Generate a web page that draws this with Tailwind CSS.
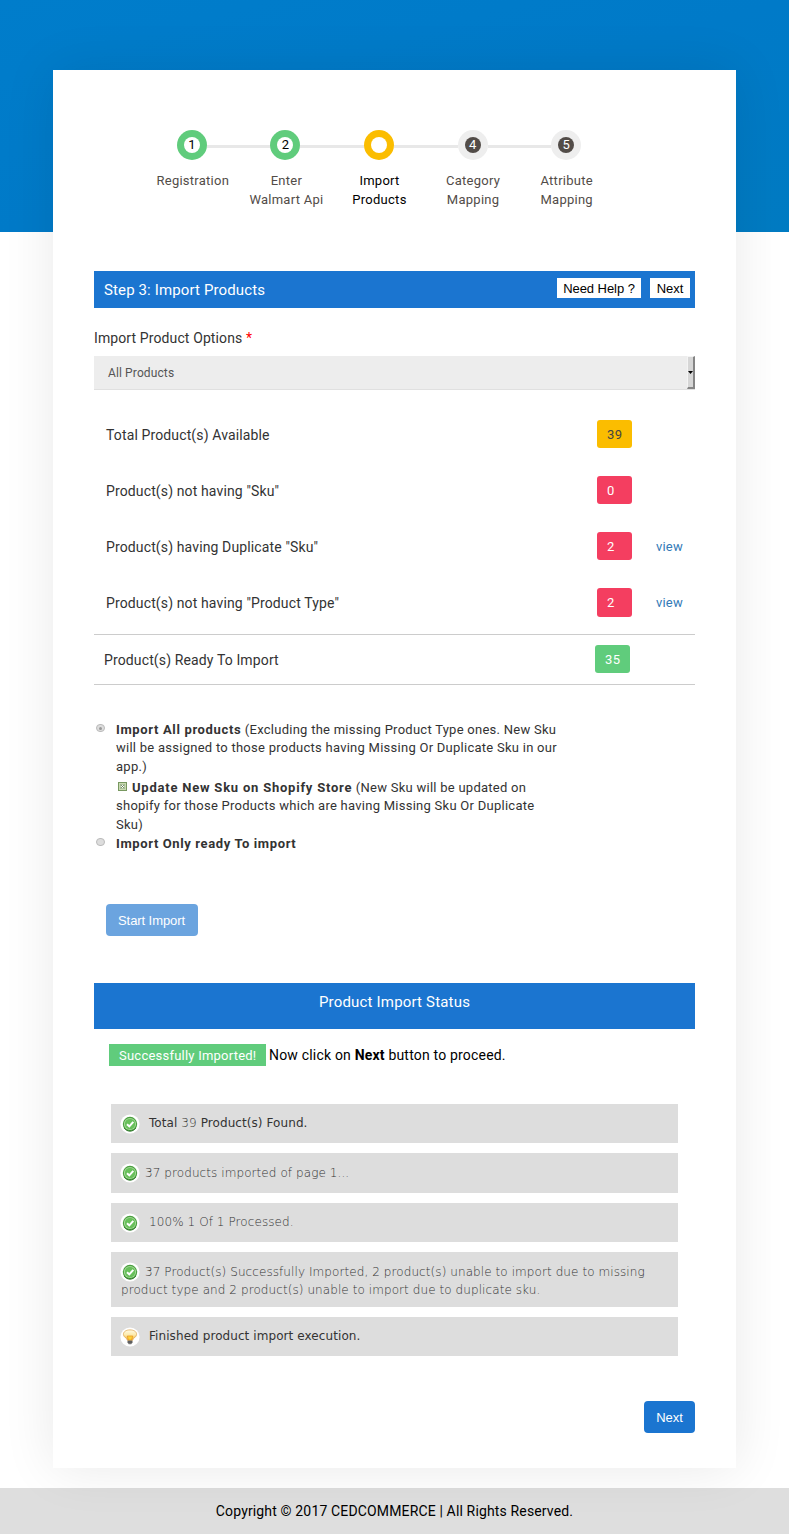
<!DOCTYPE html>
<html lang="en">
<head>
<meta charset="utf-8">
<title>Import Products</title>
<script src="https://cdn.jsdelivr.net/npm/@tailwindcss/browser@4"></script>
</head>
<body class="bg-white">
<svg class="absolute size-0">
  <defs><linearGradient id="g" x1="0" y1="0" x2="0" y2="1"><stop offset="0" stop-color="#fffbe6"/><stop offset=".5" stop-color="#fce9a8"/><stop offset="1" stop-color="#f0a020"/></linearGradient></defs>
  <symbol id="ok" viewBox="0 0 20 20">
    <circle cx="10" cy="10" r="9.6" fill="#fff"/>
    <circle cx="10" cy="10" r="7.2" fill="#4a9f3f"/>
    <circle cx="10" cy="10" r="6.1" fill="#a9dc9c"/>
    <circle cx="10" cy="10" r="5.2" fill="#68c05b"/>
    <path d="M4.2 14.2A7.2 7.2 0 0 0 15.8 14.2" fill="none" stroke="#2a7425" stroke-width="1"/>
    <path d="M7 10.2l2.3 2.2 4-4.6" fill="none" stroke="#fff" stroke-width="2"/>
  </symbol>
  <symbol id="bulb" viewBox="0 0 20 20">
    <circle cx="10" cy="10" r="9.6" fill="#fff"/>
    <path d="M7.6 13.4C7.4 11.4 3.4 10.2 3.4 7.3 3.4 4.6 6.2 2.9 10 2.9s6.6 1.7 6.6 4.4c0 2.9-4 4.1-4.2 6.1z" fill="url(#g)" stroke="#dfa955" stroke-width=".8"/>
    <path d="M7.3 9l1.1 4h3.2l1.1-4z" fill="#fbd23c" stroke="#e8951c" stroke-width=".7"/>
    <path d="M7.6 13.4h4.8v2.4l-1.2 1.4H8.8l-1.2-1.4z" fill="#777"/>
    <path d="M7.6 15h4.8" stroke="#444" stroke-width=".9"/>
  </symbol>
</svg>
<div class="relative w-[789px] h-[1534px] overflow-hidden flex flex-col font-['Roboto',sans-serif] text-[13px] leading-[18.57px] text-[#333] whitespace-nowrap">
  <div class="absolute inset-x-0 top-0 h-[232px] bg-linear-to-br from-[#007dcb] via-[#007ac8] to-[#007bc2]"></div>
  <div class="absolute inset-x-0 top-[1488px] h-[46px] bg-[#dedede]"></div>

  <main class="relative mt-[70px] ml-[53px] w-[683px] h-[1398px] shrink-0 bg-white shadow-[0_0_50px_rgba(0,0,0,0.09)] px-[41px] pt-[60px] flex flex-col">
    <ol class="ml-[51px] w-[468px] h-[81px] shrink-0 grid grid-cols-5 text-center tracking-[0.26px] text-[#524c48]">
      <li class="flex flex-col items-center">
        <div class="w-full flex items-center"><span class="flex-1"></span><span class="size-[30px] rounded-full bg-[#60cc7c] flex items-center justify-center"><b class="size-4 rounded-full bg-white text-black font-normal leading-4 tracking-normal">1</b></span><span class="flex-1 h-[3px] mt-[3px] bg-[#e8e8e8]"></span></div>
        <p class="mt-[12px] pl-[2px]">Registration</p>
      </li>
      <li class="flex flex-col items-center">
        <div class="w-full flex items-center"><span class="flex-1 h-[3px] mt-[3px] bg-[#e8e8e8]"></span><span class="size-[30px] rounded-full bg-[#60cc7c] flex items-center justify-center"><b class="size-4 rounded-full bg-white text-black font-normal leading-4 tracking-normal">2</b></span><span class="flex-1 h-[3px] mt-[3px] bg-[#e8e8e8]"></span></div>
        <p class="mt-[12px] pl-[2px]">Enter<br>Walmart Api</p>
      </li>
      <li class="flex flex-col items-center text-black">
        <div class="w-full flex items-center"><span class="flex-1 h-[3px] mt-[3px] bg-[#e8e8e8]"></span><span class="size-[30px] rounded-full bg-[#fbbd00] flex items-center justify-center"><b class="size-4 rounded-full bg-white"></b></span><span class="flex-1 h-[3px] mt-[3px] bg-[#e8e8e8]"></span></div>
        <p class="mt-[12px] pl-[1px]">Import<br>Products</p>
      </li>
      <li class="flex flex-col items-center">
        <div class="w-full flex items-center"><span class="flex-1 h-[3px] mt-[3px] bg-[#e8e8e8]"></span><span class="size-[30px] rounded-full bg-[#eee] flex items-center justify-center"><b class="size-4 rounded-full bg-[#524c48] text-white font-normal leading-4 tracking-normal">4</b></span><span class="flex-1 h-[3px] mt-[3px] bg-[#e8e8e8]"></span></div>
        <p class="mt-[12px] pl-[1px]">Category<br>Mapping</p>
      </li>
      <li class="flex flex-col items-center">
        <div class="w-full flex items-center"><span class="flex-1 h-[3px] mt-[3px] bg-[#e8e8e8]"></span><span class="size-[30px] rounded-full bg-[#eee] flex items-center justify-center"><b class="size-4 rounded-full bg-[#524c48] text-white font-normal leading-4 tracking-normal">5</b></span><span class="flex-1"></span></div>
        <p class="mt-[12px] pl-[1px]">Attribute<br>Mapping</p>
      </li>
    </ol>

    <div class="mt-[60px] h-[37px] shrink-0 bg-[#1b75d0] pl-[10px] pr-[5px] flex items-start">
      <h1 class="flex-1 text-[15px] leading-[38px] tracking-[0.13px] text-white">Step 3: Import Products</h1>
      <button class="mt-[7px] w-[84px] h-5 bg-white text-black font-['Liberation_Sans',sans-serif] text-[13px] leading-[21px] tracking-[-0.05px]">Need Help ?</button>
      <button class="mt-[7px] ml-[9px] w-10 h-5 bg-white text-black font-['Liberation_Sans',sans-serif] text-[13px] leading-[21px]">Next</button>
    </div>

    <label class="mt-[20px] text-[14px] leading-5 tracking-[0.11px]">Import Product Options <span class="text-[#f00]">*</span></label>
    <div class="mt-[8px] h-[34px] shrink-0 bg-[#ededed] border-b border-[#e0e0e0] flex items-stretch text-[12px] text-[#555]">
      <span class="pl-[14px] flex-1 leading-[34px] tracking-[0.12px]">All Products</span>
      <span class="w-[8px] bg-[#d6d6d6] border-l border-l-[#f4f4f4] border-t border-t-[#f4f4f4] border-r-2 border-r-[#858585] border-b-2 border-b-[#858585] flex items-center justify-center"><svg class="w-[5px] h-[3px] shrink-0" viewBox="0 0 5 3"><path d="M0 0h5L2.5 3z"/></svg></span>
    </div>

    <div class="mt-[30px] pl-[12px] text-[14px] tracking-[0.13px] flex flex-col">
      <div class="h-[56px] flex"><span class="w-[491px] leading-[30px]">Total Product(s) Available</span><span class="w-[35px] h-[28px] rounded-[3px] bg-[#fbbd00] pl-[10px] text-[13px] leading-[29px] tracking-[0.5px] text-[#444]">39</span></div>
      <div class="h-[56px] flex"><span class="w-[491px] leading-[30px]">Product(s) not having "Sku"</span><span class="w-[35px] h-[28px] rounded-[3px] bg-[#f43e60] pl-[10px] text-[13px] leading-[29px] text-white">0</span></div>
      <div class="h-[56px] flex"><span class="w-[491px] leading-[30px]">Product(s) having Duplicate "Sku"</span><span class="w-[35px] h-[28px] rounded-[3px] bg-[#f43e60] pl-[10px] text-[13px] leading-[29px] text-white">2</span><a class="ml-[24px] text-[13px] leading-[29px] tracking-[0.2px] text-[#337ab7]">view</a></div>
      <div class="h-[46px] flex"><span class="w-[491px] leading-[30px]">Product(s) not having "Product Type"</span><span class="w-[35px] h-[29px] rounded-[3px] bg-[#f43e60] pl-[10px] text-[13px] leading-[29px] text-white">2</span><a class="ml-[24px] text-[13px] leading-[29px] tracking-[0.2px] text-[#337ab7]">view</a></div>
    </div>
    <div class="h-[51px] shrink-0 border-y border-[#ccc] pt-[10px] pl-[10px] flex text-[14px] tracking-[0.13px]"><span class="w-[491px] leading-[30px]">Product(s) Ready To Import</span><span class="w-[35px] h-[28px] rounded-[3px] bg-[#60cc7c] pl-[10px] text-[13px] leading-[29px] tracking-[0.5px] text-white">35</span></div>

    <div class="mt-[35.6px] h-[131.4px] shrink-0 grid grid-cols-[22px_1fr] content-start tracking-[0.26px]">
      <span class="pl-[2px] pt-[3.4px]"><i class="size-[8.5px] rounded-full border border-[#bbb] bg-[#ddd] flex items-center justify-center"><i class="size-[3px] rounded-full bg-[#999]"></i></i></span>
      <p><b class="tracking-[0.65px]">Import All products</b> (Excluding the missing Product Type ones. New Sku<br>will be assigned to those products having Missing Or Duplicate Sku in our<br>app.)</p>
      <span></span>
      <p class="pt-[2.6px]"><svg class="inline-block align-baseline ml-[2px] mr-[5px] mb-[1px] size-[9px]" viewBox="0 0 9 9"><rect x=".5" y=".5" width="8" height="8" fill="#c9dab2" stroke="#789860"/><path d="M2.5 2.5h4v4h-4z" fill="#fff" stroke="#8ca678" stroke-width=".6"/><path d="M2.8 2.8l3.4 3.4M6.2 2.8L2.8 6.2" stroke="#5b7a48" stroke-width=".8"/></svg><b class="tracking-[0.78px]">Update New Sku on Shopify Store</b> (New Sku will be updated on<br>shopify for those Products which are having Missing Sku Or Duplicate<br>Sku)</p>
      <span class="pl-[2px] pt-[3.4px]"><i class="block size-[8.5px] rounded-full border border-[#bbb] bg-[#ddd]"></i></span>
      <b class="tracking-[0.62px]">Import Only ready To import</b>
    </div>

    <button class="mt-[52px] ml-[11.5px] w-[92px] h-8 shrink-0 rounded-[4px] bg-[#6ba4df] text-white font-['Liberation_Sans',sans-serif] text-[13px] tracking-[-0.08px] leading-8 pt-px">Start Import</button>

    <h2 class="mt-[47px] h-[46px] shrink-0 bg-[#1b75d0] text-center text-white text-[15px] leading-[38px] tracking-[0.18px]">Product Import Status</h2>
    <p class="mt-[15px] h-[22px] shrink-0 pl-[15px] flex text-[14px] leading-[22px] text-black tracking-[0.19px]"><span class="w-[157px] mr-[3px] pl-[10px] bg-[#60cc7c] text-white text-[13px] leading-[23px] tracking-[0.23px]">Successfully Imported!</span><span>Now click on <b>Next</b> button to proceed.</span></p>

    <ul class="mt-[38px] mx-[17px] flex flex-col gap-[10px] font-['DejaVu_Sans',sans-serif] text-[12px] leading-[18px] text-[#333] font-extralight tracking-[0.08px]">
      <li class="h-[39px] bg-[#ddd] pl-[9px] pt-[10px] flex"><svg class="size-5 shrink-0"><use href="#ok"/></svg><span class="ml-[9px]"><span class="font-normal text-[#333]">Total</span> 39 <span class="font-normal text-[#333]">Product(s) Found.</span></span></li>
      <li class="h-[40px] bg-[#ddd] pl-[9px] pt-[10px] flex"><svg class="size-5 shrink-0"><use href="#ok"/></svg><span class="ml-[5px] pt-px">37 products imported of page 1...</span></li>
      <li class="h-[39px] bg-[#ddd] pl-[9px] pt-[10px] flex"><svg class="size-5 shrink-0"><use href="#ok"/></svg><span class="ml-[9px]">100% 1 Of 1 Processed.</span></li>
      <li class="h-[55px] bg-[#ddd] pl-[9px] pt-[10px] flex flex-col"><span class="flex h-[19px]"><svg class="size-5 shrink-0"><use href="#ok"/></svg><span class="ml-[5px] pt-px">37 Product(s) Successfully Imported, 2 product(s) unable to import due to missing</span></span><span class="pl-[1px]">product type and 2 product(s) unable to import due to duplicate sku.</span></li>
      <li class="h-[39px] bg-[#ddd] pl-[9px] pt-[10px] flex"><svg class="size-5 shrink-0"><use href="#bulb"/></svg><span class="ml-[9px] font-normal text-[#333]">Finished product import execution.</span></li>
    </ul>

    <button class="mt-[45px] self-end w-[51px] h-8 shrink-0 rounded-[4px] bg-[#1b75d0] text-white font-['Liberation_Sans',sans-serif] text-[13px] leading-8 pt-px">Next</button>
  </main>
  <footer class="relative mt-[20px] h-[46px] shrink-0 text-center text-[14px] leading-[46px] text-black tracking-[0.15px]">Copyright © 2017 CEDCOMMERCE | All Rights Reserved.</footer>
</div>
</body>
</html>
